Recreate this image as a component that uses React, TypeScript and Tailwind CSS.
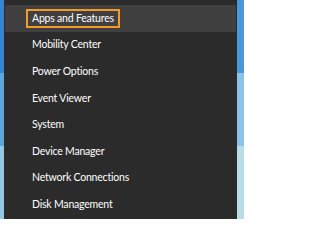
const items = [
  "Apps and Features",
  "Mobility Center",
  "Power Options",
  "Event Viewer",
  "System",
  "Device Manager",
  "Network Connections",
  "Disk Management",
];

export default function App() {
  return (
    <div className="flex h-[219px] w-[244px] overflow-hidden bg-[#5aa3dc]">
      <div className="flex w-[4px] shrink-0 flex-col">
        <div className="flex-1 bg-[#3585d3]" />
        <div className="flex-1 bg-[#5da6dc]" />
        <div className="flex-1 bg-[#94c8e4]" />
      </div>
      <div className="flex w-[233px] shrink-0 flex-col bg-[#2b2b2b] pt-[5px] font-['Lato','Open_Sans',sans-serif] text-[10.5px] tracking-[-0.2px] text-white">
        {items.map((label, i) => (
          <div
            key={label}
            className={
              i === 0
                ? "mx-[1px] flex h-[27px] items-center bg-[#404040] pl-[21px]"
                : "flex h-[26.6px] items-center pl-[28px]"
            }
          >
            {i === 0 ? (
              <span className="flex h-[19px] items-center border-2 border-[#f39a2b] px-[4px]">{label}</span>
            ) : (
              <span>{label}</span>
            )}
          </div>
        ))}
      </div>
      <div className="flex w-[7px] shrink-0 flex-col">
        <div className="flex-1 bg-[#4a98dc]" />
        <div className="flex-1 bg-[#8cc3e6]" />
        <div className="flex-1 bg-[#b8dde6]" />
      </div>
    </div>
  );
}
